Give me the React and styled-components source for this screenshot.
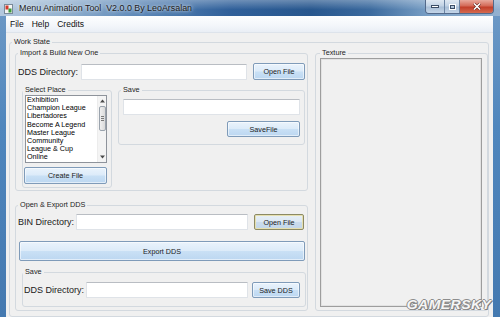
import React from 'react';
import styled, { createGlobalStyle } from 'styled-components';

const GlobalStyle = createGlobalStyle`
  html, body {
    margin: 0;
    padding: 0;
    background: #fff;
  }
  body {
    width: 500px;
    height: 317px;
    overflow: hidden;
    font-family: "Liberation Sans", Arial, sans-serif;
    color: #1a1a1a;
  }
`;

const Window = styled.div`
  position: relative;
  width: 500px;
  height: 317px;
  display: flex;
  flex-direction: column;
  overflow: hidden;
  background: linear-gradient(180deg, #6f9ac6 0%, #4f86bd 40%, #4479b0 100%);
`;

const TitleBar = styled.div`
  height: 16px;
  flex-shrink: 0;
  display: flex;
  align-items: flex-start;
  background:
    linear-gradient(180deg, rgba(255, 255, 255, 0.3) 0%, rgba(255, 255, 255, 0) 60%),
    linear-gradient(90deg, #b4c9de 0%, #94b2d0 12%, #5a86b6 28%, #30609a 46%, #28578e 62%, #3b6a9e 74%, #7aa0c6 86%, #93b1d0 100%);
`;

const AppIcon = styled.svg`
  width: 9px;
  height: 10px;
  margin: 4px 0 0 4px;
  flex-shrink: 0;
`;

const Title = styled.div`
  margin: 3px 0 0 6px;
  font-size: 8.9px;
  line-height: 10px;
  color: #1c1c1c;
  white-space: pre;
  text-shadow: 0 0 3px rgba(255, 255, 255, 0.9), 0 0 6px rgba(255, 255, 255, 0.6);
`;

const Controls = styled.div`
  margin: 0 6px 0 auto;
  display: flex;
  height: 13px;
  border: 1px solid #53698a;
  border-top: none;
  border-radius: 0 0 4px 4px;
  overflow: hidden;
`;

const CtrlButton = styled.div`
  width: ${p => p.$w}px;
  height: 13px;
  display: flex;
  align-items: center;
  justify-content: center;
  border-left: ${p => (p.$first ? 'none' : '1px solid #6b84a3')};
  background: ${p =>
    p.$close
      ? 'linear-gradient(180deg, #e8a99c 0%, #d46a58 45%, #c23f2a 55%, #d56a4f 100%)'
      : 'linear-gradient(180deg, #dfe8f2 0%, #c2d3e5 45%, #a9bfd7 55%, #c4d5e8 100%)'};
`;

const Client = styled.div`
  flex: 1;
  margin: 0 7px 0 6px;
  display: flex;
  flex-direction: column;
  background: #f0f0f0;
`;

const MenuBar = styled.div`
  height: 16px;
  flex-shrink: 0;
  display: flex;
  align-items: center;
  background: linear-gradient(180deg, #fdfeff 0%, #f3f6fa 60%, #e9eef5 100%);
  border-bottom: 1px solid #dde3eb;
`;

const MenuItem = styled.span`
  padding: 0 4px;
  font-size: 8.5px;
  line-height: 16px;
  color: #111;
`;

const Content = styled.div`
  flex: 1;
  padding: 4px 4px 0 3px;
`;

const Group = styled.fieldset`
  margin: ${p => p.$m || '0'};
  padding: 0;
  min-width: 0;
  box-sizing: border-box;
  width: ${p => p.$w}px;
  height: ${p => p.$h}px;
  border: 1px solid #d3d9df;
  border-radius: 3px;
  flex-shrink: 0;
`;

const Legend = styled.legend`
  margin-left: ${p => p.$off || 0}px;
  padding: 0 2px;
  font-size: 7.3px;
  line-height: 10px;
  color: #1e1e1e;
`;

const Row = styled.div`
  display: flex;
  align-items: ${p => p.$align || 'center'};
  gap: ${p => p.$gap || 0}px;
  margin: ${p => p.$m || '0'};
`;

const Column = styled.div`
  display: flex;
  flex-direction: column;
  margin: ${p => p.$m || '0'};
`;

const Label = styled.span`
  width: ${p => p.$w}px;
  flex-shrink: 0;
  font-size: 9px;
  color: #1a1a1a;
  white-space: nowrap;
`;

const TextBox = styled.div`
  box-sizing: border-box;
  width: ${p => p.$w}px;
  height: 16px;
  margin: ${p => p.$m || '0'};
  background: #fff;
  border: 1px solid #dfe3e8;
  border-top-color: #b9bdc3;
  border-radius: 1px;
  flex-shrink: 0;
`;

const Button = styled.div`
  box-sizing: border-box;
  width: ${p => p.$w}px;
  height: ${p => p.$h || 16}px;
  margin: ${p => p.$m || '0'};
  display: flex;
  align-items: center;
  justify-content: center;
  flex-shrink: 0;
  font-size: 7.2px;
  color: #1a1a1a;
  border-radius: 2px;
  border: 1px solid ${p => (p.$focused ? '#8c8a64' : '#7f9bb9')};
  box-shadow: inset 0 0 0 1px ${p => (p.$focused ? '#e6e0b0' : 'rgba(255, 255, 255, 0.55)')};
  background: ${p =>
    p.$focused
      ? 'linear-gradient(180deg, #e8f0f7 0%, #dce8f3 48%, #cbdcec 52%, #c2d6ea 100%)'
      : 'linear-gradient(180deg, #eaf3fc 0%, #dcebf9 48%, #c9e0f5 52%, #bcd7f1 100%)'};
`;

const ListBox = styled.div`
  box-sizing: border-box;
  width: 82px;
  height: 68px;
  margin: 0 0 0 2px;
  display: flex;
  background: #fff;
  border: 1px solid #8e939b;
`;

const ListItems = styled.div`
  flex: 1;
  padding: 0 0 0 1px;
  overflow: hidden;
`;

const ListItem = styled.div`
  font-size: 7.2px;
  line-height: 8.2px;
  white-space: nowrap;
  color: #000;
`;

const ScrollBar = styled.div`
  width: 8px;
  display: flex;
  flex-direction: column;
  align-items: center;
  justify-content: space-between;
  background: #f4f4f4;
  border-left: 1px solid #ececec;
`;

const Arrow = styled.svg`
  width: 5px;
  height: 4px;
  margin: 3px 0;
`;

const Thumb = styled.div`
  box-sizing: border-box;
  width: 7px;
  height: 25px;
  display: flex;
  flex-direction: column;
  align-items: center;
  justify-content: center;
  gap: 1px;
  border: 1px solid #9aa3ad;
  border-radius: 2px;
  background: linear-gradient(90deg, #f0f0f0, #dadada);
`;

const Grip = styled.span`
  width: 3px;
  height: 1px;
  background: #7a7a7a;
`;

const Spacer = styled.div`
  flex: 1;
`;

const TexturePanel = styled.div`
  box-sizing: border-box;
  width: 162px;
  height: 249px;
  margin: 0 0 0 4px;
  background: #f0f0f0;
  border: 1px solid #9d9d9d;
  box-shadow: inset 0 0 0 1px #e2e2e2;
`;

const Watermark = styled.div`
  position: absolute;
  right: 9px;
  bottom: 5px;
  font-size: 13px;
  font-weight: bold;
  font-style: italic;
  letter-spacing: 0.4px;
  color: #f6f6f6;
  transform: scaleX(1.08);
  transform-origin: right bottom;
  text-shadow: -1px 0 #8d8d8d, 1px 0 #8d8d8d, 0 -1px #8d8d8d, 0 1px #8d8d8d, 1px 1px #6b6b6b;
`;

const places = [
  'Exhibition',
  'Champion League',
  'Libertadores',
  'Become A Legend',
  'Master League',
  'Community',
  'League & Cup',
  'Online',
];

export default function App() {
  return (
    <>
      <GlobalStyle />
      <Window>
        <TitleBar>
          <AppIcon viewBox="0 0 9 10">
            <rect x="0.5" y="0.5" width="8" height="9" fill="#f4f4f4" stroke="#7a8a99" />
            <rect x="1.5" y="1.5" width="3" height="4" fill="#d23a2c" />
            <rect x="4.5" y="4.5" width="3" height="4" fill="#3d9a3a" />
          </AppIcon>
          <Title>Menu Animation Tool  V2.0.0 By LeoArsalan</Title>
          <Controls>
            <CtrlButton $w={18} $first>
              <svg width="8" height="3" viewBox="0 0 8 3">
                <rect x="0.5" y="0.5" width="7" height="2" fill="#fff" stroke="#3b4d66" />
              </svg>
            </CtrlButton>
            <CtrlButton $w={14}>
              <svg width="7" height="6" viewBox="0 0 7 6">
                <rect x="0.5" y="0.5" width="6" height="5" fill="none" stroke="#fff" />
                <rect x="1.5" y="1.5" width="4" height="3" fill="none" stroke="#3b4d66" />
              </svg>
            </CtrlButton>
            <CtrlButton $w={33} $close>
              <svg width="8" height="7" viewBox="0 0 8 7">
                <path d="M1 0.5 L7 6.5 M7 0.5 L1 6.5" stroke="#5a1a12" strokeWidth="2.6" />
                <path d="M1 0.5 L7 6.5 M7 0.5 L1 6.5" stroke="#fff" strokeWidth="1.6" />
              </svg>
            </CtrlButton>
          </Controls>
        </TitleBar>
        <Client>
          <MenuBar>
            <MenuItem>File</MenuItem>
            <MenuItem>Help</MenuItem>
            <MenuItem>Credits</MenuItem>
          </MenuBar>
          <Content>
            <Group $w={480} $h={280}>
              <Legend $off={2}>Work State</Legend>
              <Row $align="flex-start" $gap={7} $m="1px 0 0 5px">
                <Column>
                  <Group $w={293} $h={143}>
                    <Legend $off={2}>Import &amp; Build New One</Legend>
                    <Row $m="5px 0 0 2px">
                      <Label $w={63}>DDS Directory:</Label>
                      <TextBox $w={166} />
                      <Button $w={52} $h={17} $m="0 0 0 6px">Open File</Button>
                    </Row>
                    <Row $align="flex-start" $gap={6} $m="5px 0 0 6px">
                      <Group $w={90} $h={103}>
                        <Legend $off={0}>Select Place</Legend>
                        <ListBox>
                          <ListItems>
                            {places.map(p => (
                              <ListItem key={p}>{p}</ListItem>
                            ))}
                          </ListItems>
                          <ScrollBar>
                            <Arrow viewBox="0 0 5 4">
                              <path d="M0 3.5 L2.5 0.5 L5 3.5 Z" fill="#4a4a4a" />
                            </Arrow>
                            <Thumb>
                              <Grip />
                              <Grip />
                              <Grip />
                            </Thumb>
                            <Spacer />
                            <Arrow viewBox="0 0 5 4">
                              <path d="M0 0.5 L2.5 3.5 L5 0.5 Z" fill="#4a4a4a" />
                            </Arrow>
                          </ScrollBar>
                        </ListBox>
                        <Button $w={83} $h={17} $m="4px 0 0 1px">Create File</Button>
                      </Group>
                      <Group $w={187} $h={60}>
                        <Legend $off={2}>Save</Legend>
                        <TextBox $w={177} $m="4px 0 0 4px" />
                        <Button $w={73} $m="6px 0 0 108px">SaveFile</Button>
                      </Group>
                    </Row>
                  </Group>
                  <Group $w={293} $h={111} $m="9px 0 0 0">
                    <Legend $off={2}>Open &amp; Export DDS</Legend>
                    <Row $m="3px 0 0 2px">
                      <Label $w={58}>BIN Directory:</Label>
                      <TextBox $w={172} />
                      <Button $w={50} $m="1px 0 0 6px" $focused>Open File</Button>
                    </Row>
                    <Button $w={286} $h={20} $m="11px 0 0 3px">Export DDS</Button>
                    <Group $w={284} $h={40} $m="6px 0 0 6px">
                      <Legend $off={0}>Save</Legend>
                      <Row $m="5px 0 0 1px">
                        <Label $w={62}>DDS Directory:</Label>
                        <TextBox $w={162} />
                        <Button $w={48} $m="0 0 0 4px">Save DDS</Button>
                      </Row>
                    </Group>
                  </Group>
                </Column>
                <Group $w={173} $h={263}>
                  <Legend $off={4}>Texture</Legend>
                  <TexturePanel />
                </Group>
              </Row>
            </Group>
          </Content>
        </Client>
        <Watermark>GAMERSKY</Watermark>
      </Window>
    </>
  );
}
